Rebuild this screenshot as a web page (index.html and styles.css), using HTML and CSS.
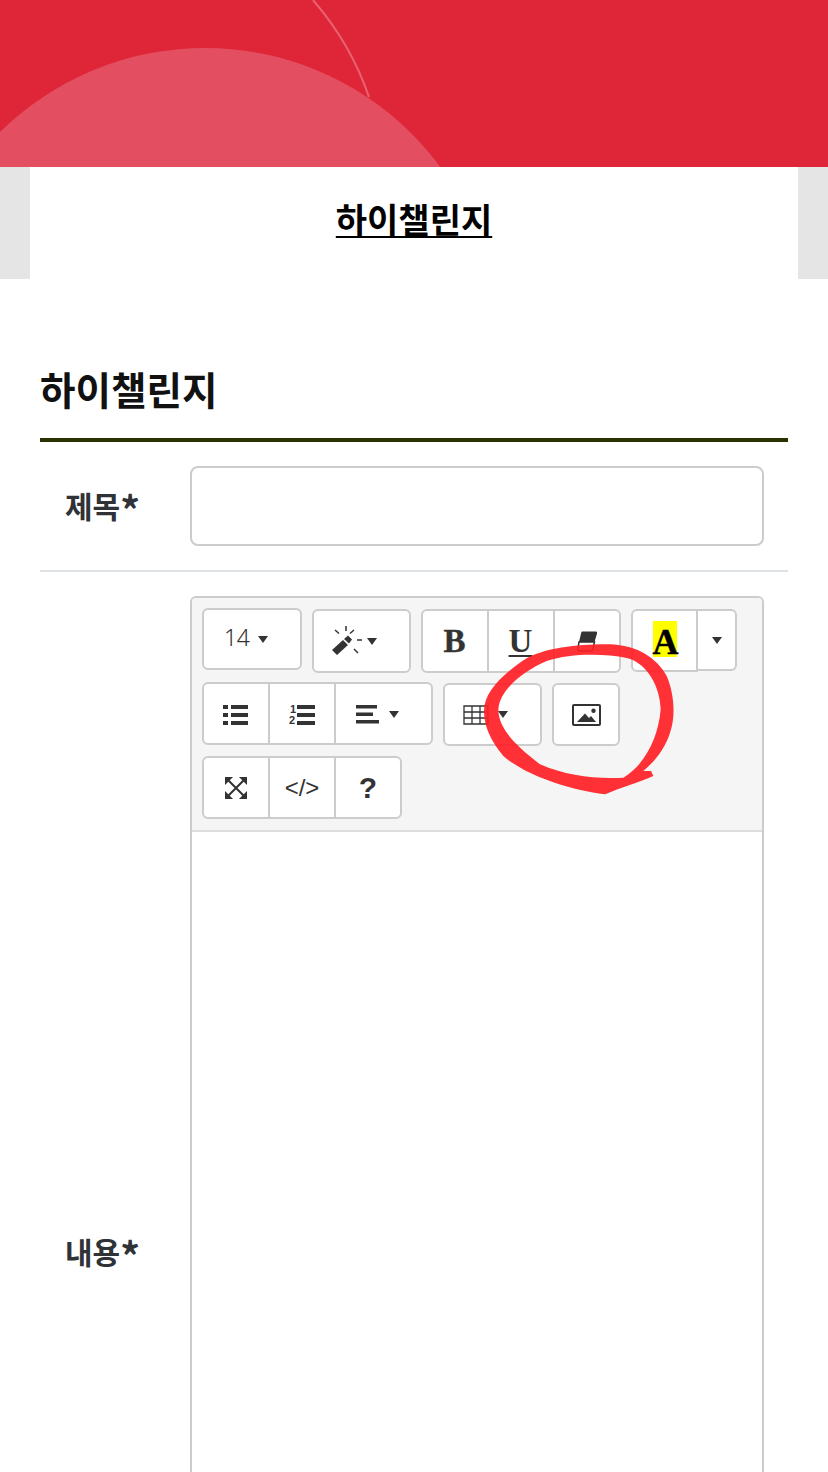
FILE: index.html
```html
<!DOCTYPE html>
<html lang="ko">
<head>
<meta charset="utf-8">
<title>하이챌린지</title>
<link rel="stylesheet" href="styles.css">
</head>
<body>
<div class="page">
  <header class="hero">
    <svg class="hero-art" width="828" height="167" viewBox="0 0 828 167">
      <path d="M313 0 Q351 44 369 97" fill="none" stroke="#e9616f" stroke-width="2"/>
      <circle cx="205" cy="340" r="292" fill="#e34f60"/>
    </svg>
  </header>
  <div class="band">
    <div class="band-inner"><a class="band-title" href="#">하이챌린지</a></div>
  </div>
  <main class="main">
    <h2 class="section-title">하이챌린지</h2>
    <div class="row row-title">
      <label class="label">제목<span class="star">*</span></label>
      <div class="field"><div class="input"></div></div>
    </div>
    <div class="row row-body">
      <label class="label">내용<span class="star">*</span></label>
      <div class="field">
        <div class="editor">
          <div class="toolbar">
            <div class="tool-row tool-row-1">
              <div class="btn w100 h62 pad-num"><span class="num">14</span><i class="caret"></i></div>
              <div class="btn w99 h64 pad-wand">
                <svg class="ic" width="32" height="30" viewBox="0 0 32 30">
                  <path d="M1 24 L12 14 L17 19 L6 29 Z M13 13 L17 9.500 L21 13.500 L18 17.500 Z" fill="#333"/>
                  <path d="M15 0 V5 M4 4 L8 7.500 M23 4 L19 7.500 M26 14 H31 M23 23 L27 27" stroke="#333" stroke-width="1.500" fill="none"/>
                </svg>
                <i class="caret"></i>
              </div>
              <div class="group h64">
                <div class="cell w66 serif">B</div>
                <div class="cell w66 serif under">U</div>
                <div class="cell w66">
                  <svg width="21" height="21" viewBox="0 0 21 21">
                    <path d="M5 0.500 H19 Q20.500 0.500 20 2.500 L17.500 11 H2 L4 2.500 Q4.500 0.500 5 0.500 Z" fill="#333"/>
                    <path d="M2 11 H17.500 L16 18 Q15.500 20 14 20 H2.500 Q0.500 20 1 18 Z" fill="#fff" stroke="#333" stroke-width="1.500"/>
                  </svg>
                </div>
              </div>
              <div class="color-wrap">
                <div class="cell-color"><span class="hl">A</span></div>
                <div class="cell-drop"><i class="caret"></i></div>
              </div>
            </div>
            <div class="tool-row tool-row-2">
              <div class="group h63">
                <div class="cell w66 nudge">
                  <svg width="26" height="20" viewBox="0 0 26 20"><path d="M0 0H5V4H0Z M8 0H25V4H8Z M0 8H5V12H0Z M8 8H25V12H8Z M0 16H5V20H0Z M8 16H25V20H8Z" fill="#333"/></svg>
                </div>
                <div class="cell w66 nudge">
                  <svg width="26" height="22" viewBox="0 0 26 22"><text x="1" y="9" class="mini">1</text><text x="0" y="20" class="mini">2</text><path d="M8 1H26V5H8Z M8 9H26V13H8Z M8 17H26V21H8Z" fill="#333"/></svg>
                </div>
                <div class="cell w98 pad-align">
                  <svg class="ic" width="23" height="19" viewBox="0 0 23 19"><path d="M0 0H21V3.500H0Z M0 7.500H17V11H0Z M0 15H23V18.500H0Z" fill="#333"/></svg>
                  <i class="caret"></i>
                </div>
              </div>
              <div class="btn w99 h63 low1 pad-table">
                <svg class="ic" width="26" height="20" viewBox="0 0 26 20"><path d="M1 1H25V19H1Z M1 7H25 M1 13H25 M9 1V19 M17 1V19" fill="none" stroke="#333" stroke-width="1.300"/></svg>
                <i class="caret"></i>
              </div>
              <div class="btn w68 h63 low1">
                <svg width="29" height="22" viewBox="0 0 29 22"><rect x="1" y="1" width="27" height="20" rx="1" fill="none" stroke="#333" stroke-width="2"/><path d="M5 18 L13 9.500 L17 14 L19 12 L24 18 Z" fill="#333"/><circle cx="21.500" cy="6.700" r="2.200" fill="#333"/></svg>
              </div>
            </div>
            <div class="tool-row tool-row-3">
              <div class="group h63">
                <div class="cell w66">
                  <svg width="22" height="22" viewBox="0 0 22 22"><path d="M0 0H8L0 8Z M22 0V8L14 0Z M0 22V14L8 22Z M22 22H14L22 14Z" fill="#333"/><path d="M3 3L19 19 M19 3L3 19" stroke="#333" stroke-width="2" fill="none"/></svg>
                </div>
                <div class="cell w66 code">&lt;/&gt;</div>
                <div class="cell w66 help">?</div>
              </div>
            </div>
          </div>
          <div class="editable"></div>
        </div>
      </div>
    </div>
  </main>
  <svg class="scribble" width="300" height="240" viewBox="0 0 900 720">
    <path fill-rule="evenodd" d="M405 595 C300 582 170 540 100 480 C58 430 42 385 42 345 C42 290 95 235 170 187 C240 150 340 145 420 145 C500 148 560 185 590 240 C612 290 618 360 600 410 C585 460 550 500 520 525 L543 525 L550 540 C510 558 450 575 405 595 Z M460 545 C520 510 565 430 572 340 C570 270 530 200 470 186 C400 172 300 172 230 195 C160 225 90 280 85 340 C85 400 140 450 210 505 C290 540 380 550 460 545 Z" fill="#ff2025" opacity=".92"/>
  </svg>
</div>
</body>
</html>
```

FILE: styles.css
```css
* { box-sizing: border-box; }
html, body { margin: 0; padding: 0; background: #fff; }
body { font-family: "Noto Sans CJK KR", "Noto Sans", sans-serif; }
.page { position: relative; width: 828px; height: 1472px; overflow: hidden; }

.hero { position: relative; height: 167px; background: #df2639; overflow: hidden; }
.hero-art { display: block; }

.band { height: 112px; background: #e5e5e5; padding: 0 30px; }
.band-inner { height: 100%; background: #fff; display: flex; justify-content: center; padding-top: 25px; }
.band-title { font-size: 34px; line-height: 54px; height: 54px; font-weight: 700; color: #000; text-decoration: underline; text-decoration-thickness: 2px; text-underline-offset: 3px; }

.main { padding: 0 40px; }
.section-title { margin: 0; height: 163px; padding-top: 80px; font-size: 38.6px; line-height: 58px; font-weight: 700; color: #111; border-bottom: 4px solid #2a3300; }

.row { display: flex; align-items: center; border-bottom: 2px solid #e0e3e6; }
.row-title { height: 130px; }
.row-body { height: 1360px; border-bottom: 0; align-items: flex-start; }
.row-body .label { align-self: center; }
.label { width: 150px; padding-left: 25px; padding-bottom: 2px; font-size: 30px; font-weight: 700; color: #2f3237; white-space: nowrap; }
.star { font-size: 39px; line-height: 0; vertical-align: -7px; }
.field { width: 574px; }
.row-body .field { padding-top: 24px; }

.input { height: 80px; border: 2px solid #ccc; border-radius: 8px; background: #fff; }

.editor { border: 2px solid #ccc; border-radius: 6px; background: #fff; height: 1400px; }
.toolbar { height: 234px; background: #f5f5f5; border-bottom: 2px solid #ddd; border-radius: 4px 4px 0 0; padding: 10px 0 0 10px; }
.tool-row { display: flex; align-items: flex-start; gap: 10px; }
.tool-row-1 { height: 74px; }
.tool-row-2 { height: 74px; }
.tool-row-3 { height: 64px; }

.btn, .group { background: #fff; border: 2px solid #ccc; border-radius: 6px; display: flex; }
.btn { align-items: center; justify-content: center; color: #333; }
.w100 { width: 100px; }
.w99 { width: 99px; }
.w68 { width: 68px; }
.w66 { width: 66px; }
.w98 { width: 97px; }
.h62 { height: 62px; }
.h63 { height: 63px; }
.h64 { height: 64px; }
.low1 { margin-top: 1px; }
.tool-row-1 .w99, .tool-row-1 .group, .color-wrap { margin-top: 1px; }

.pad-num { justify-content: flex-start; padding-left: 20px; gap: 9px; }
.pad-wand { justify-content: flex-start; padding-left: 17px; gap: 4px; }
.pad-table { justify-content: flex-start; padding-left: 18px; gap: 9px; }

.num { font-family: "Noto Sans", sans-serif; font-size: 23px; font-weight: 300; color: #333; letter-spacing: -0.5px; width: 25px; margin-top: -4px; }
.caret { display: inline-block; flex: none; width: 0; height: 0; border-left: 5.500px solid transparent; border-right: 5.500px solid transparent; border-top: 7px solid #333; }

.cell { display: flex; align-items: center; justify-content: center; gap: 10px; border-left: 2px solid #ccc; color: #333; }
.cell:first-child { border-left: 0; }
.group .w66:first-child { width: 64px; }
.nudge { padding-top: 2px; }
.cell.pad-align { justify-content: flex-start; padding-left: 20px; padding-top: 2px; }
.ic { flex: none; }
.serif { font-family: "Liberation Serif", serif; font-weight: 700; font-size: 33px; -webkit-text-stroke: 0.4px #333; padding-right: 1px; }
.under { text-decoration: underline; text-decoration-thickness: 1.500px; text-underline-offset: 3px; -webkit-text-stroke: 0; }
.code { font-family: "Liberation Sans", sans-serif; font-size: 24px; }
.help { font-family: "Liberation Sans", sans-serif; font-weight: 700; font-size: 30px; }
.mini { font-family: "Liberation Sans", sans-serif; font-size: 11px; font-weight: 700; fill: #333; }

.color-wrap { display: flex; align-items: flex-start; }
.cell-color { width: 67px; height: 63px; padding-bottom: 3px; background: #fff; border: 2px solid #ccc; border-radius: 6px 0 0 6px; display: flex; align-items: center; justify-content: center; }
.hl { display: block; width: 24px; height: 36px; background: #ff0; color: #000; font-family: "Liberation Serif", serif; font-weight: 700; font-size: 36px; letter-spacing: -2px; line-height: 42px; text-align: center; -webkit-text-stroke: 0.4px #000; }
.cell-drop { width: 39px; height: 62px; background: #fff; border: 2px solid #ccc; border-left: 0; border-radius: 0 6px 6px 0; display: flex; align-items: center; justify-content: center; }

.editable { background: #fff; }

.scribble { position: absolute; left: 470px; top: 596px; pointer-events: none; }
```
